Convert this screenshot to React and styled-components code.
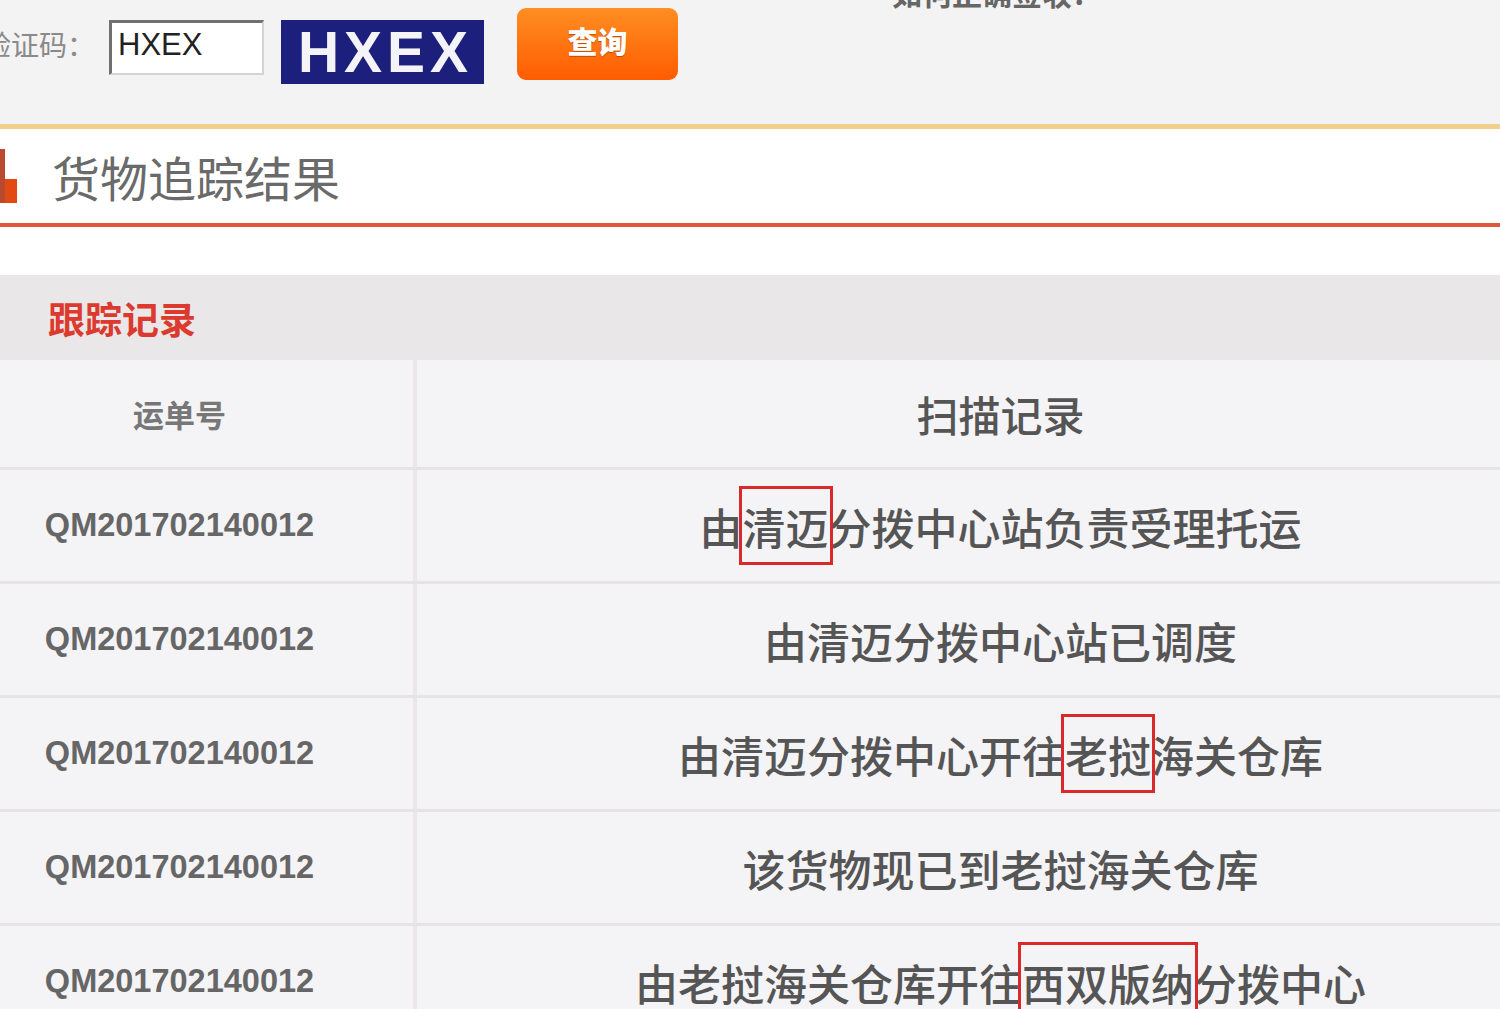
import styled, { createGlobalStyle } from "styled-components";

const GlobalStyle = createGlobalStyle`
  html, body {
    margin: 0;
    padding: 0;
    background: #f4f3f4;
    overflow: hidden;
  }
  body {
    font-family: "Liberation Sans", "Noto Sans CJK SC", sans-serif;
  }
`;

const Page = styled.div`
  width: 1500px;
  height: 1009px;
  overflow: hidden;
  background: #f4f3f4;
`;

const QueryBar = styled.div`
  height: 124px;
  display: flex;
  align-items: flex-start;
  border-bottom: 5px solid #f1d08e;
  box-shadow: 0 1px 2px rgba(230, 180, 100, 0.4);
`;

const Label = styled.span`
  margin: 30px 0 0 -17px;
  width: 126px;
  flex-shrink: 0;
  font-family: "Noto Sans CJK SC", sans-serif;
  font-size: 28px;
  line-height: 1;
  color: #8a8a8a;
`;

const CodeInput = styled.div`
  margin-top: 20px;
  width: 155px;
  height: 55px;
  flex-shrink: 0;
  box-sizing: border-box;
  background: #fff;
  border: 2px solid #d4d4d4;
  border-top: 3px solid #707070;
  border-left: 3px solid #707070;
  padding: 4px 0 0 6px;
  font-family: "Liberation Sans", sans-serif;
  font-size: 31px;
  color: #222;
`;

const Captcha = styled.div`
  margin: 20px 0 0 17px;
  width: 203px;
  height: 64px;
  flex-shrink: 0;
  background: #1c1f7c;
  color: #f4f4f8;
  display: flex;
  align-items: center;
  justify-content: center;
  padding-left: 6px;
  box-sizing: border-box;
  font-family: "Liberation Sans", sans-serif;
  font-weight: bold;
  font-size: 57px;
  letter-spacing: 5px;
`;

const QueryButton = styled.button`
  margin: 8px 0 0 33px;
  width: 161px;
  height: 72px;
  flex-shrink: 0;
  border: none;
  border-radius: 9px;
  background: linear-gradient(#ff8e22, #ff5c02);
  color: #fff;
  font-family: "Noto Sans CJK SC", sans-serif;
  font-weight: 900;
  font-size: 30px;
  text-shadow: 0 1px 1px rgba(120, 40, 0, 0.5);
  padding: 0 0 8px;
`;

const HelpLink = styled.span`
  margin: -30px 0 0 214px;
  font-family: "Noto Sans CJK SC", sans-serif;
  font-weight: bold;
  font-size: 30px;
  color: #666;
  white-space: nowrap;
`;

const ResultHeader = styled.div`
  height: 94px;
  background: #fff;
  display: flex;
  align-items: center;
  gap: 34px;
  border-bottom: 4px solid #e2583e;
`;

const ResultTitle = styled.h2`
  margin: 0;
  font-family: "Noto Sans CJK SC", sans-serif;
  font-weight: 400;
  font-size: 48px;
  color: #6a6a6a;
`;

const Spacer = styled.div`
  height: 48px;
  background: #fff;
`;

const SectionBand = styled.div`
  height: 85px;
  background: #e9e7e8;
  display: flex;
  align-items: center;
  padding-left: 48px;
  font-family: "Noto Sans CJK SC", sans-serif;
  font-weight: bold;
  font-size: 37px;
  color: #dc3a2e;
`;

const Table = styled.div`
  margin-left: -54px;
  width: 1638px;
`;

const Row = styled.div`
  display: grid;
  grid-template-columns: 467px 1fr;
  height: ${({ $head }) => ($head ? "107px" : "111px")};
  background: #f4f3f5;
  border-bottom: 3px solid #e5e3e5;
`;

const Cell = styled.div`
  display: flex;
  align-items: center;
  justify-content: center;
  font-family: "Noto Sans CJK SC", sans-serif;
  color: #555;
  & + & {
    border-left: 4px solid #e9e7e9;
  }
`;

const HeadText = styled.span`
  font-weight: ${({ $small }) => ($small ? 700 : 500)};
  font-size: ${({ $small }) => ($small ? "31px" : "42px")};
  color: ${({ $small }) => ($small ? "#777" : "#555")};
`;

const Waybill = styled.span`
  font-family: "Liberation Sans", sans-serif;
  font-weight: bold;
  font-size: 32.5px;
  color: #666;
`;

const ScanText = styled.span`
  font-weight: 500;
  font-size: 43px;
  color: #555;
`;

const Mark = styled.span`
  position: relative;
  &::after {
    content: "";
    position: absolute;
    left: -4px;
    right: -4px;
    top: -9px;
    bottom: -8px;
    border: 3px solid #d82a2a;
  }
`;

const BarIcon = () => (
  <svg width="18" height="58" viewBox="0 0 18 58" style={{ marginTop: 4 }}>
    <rect x="0" y="0" width="5" height="54" fill="#b84a30" />
    <rect x="5" y="30" width="12" height="24" fill="#e14a12" />
  </svg>
);

const records = [
  ["由", ["清迈"], "分拨中心站负责受理托运"],
  ["由清迈分拨中心站已调度"],
  ["由清迈分拨中心开往", ["老挝"], "海关仓库"],
  ["该货物现已到老挝海关仓库"],
  ["由老挝海关仓库开往", ["西双版纳"], "分拨中心"],
];

export default function App() {
  return (
    <Page>
      <GlobalStyle />
      <QueryBar>
        <Label>验证码：</Label>
        <CodeInput>HXEX</CodeInput>
        <Captcha>HXEX</Captcha>
        <QueryButton>查询</QueryButton>
        <HelpLink>如何正确签收?</HelpLink>
      </QueryBar>
      <ResultHeader>
        <BarIcon />
        <ResultTitle>货物追踪结果</ResultTitle>
      </ResultHeader>
      <Spacer />
      <SectionBand>跟踪记录</SectionBand>
      <Table>
        <Row $head>
          <Cell>
            <HeadText $small>运单号</HeadText>
          </Cell>
          <Cell>
            <HeadText>扫描记录</HeadText>
          </Cell>
        </Row>
        {records.map((parts, i) => (
          <Row key={i}>
            <Cell>
              <Waybill>QM201702140012</Waybill>
            </Cell>
            <Cell>
              <ScanText>
                {parts.map((p, j) =>
                  Array.isArray(p) ? <Mark key={j}>{p[0]}</Mark> : <span key={j}>{p}</span>
                )}
              </ScanText>
            </Cell>
          </Row>
        ))}
      </Table>
    </Page>
  );
}
